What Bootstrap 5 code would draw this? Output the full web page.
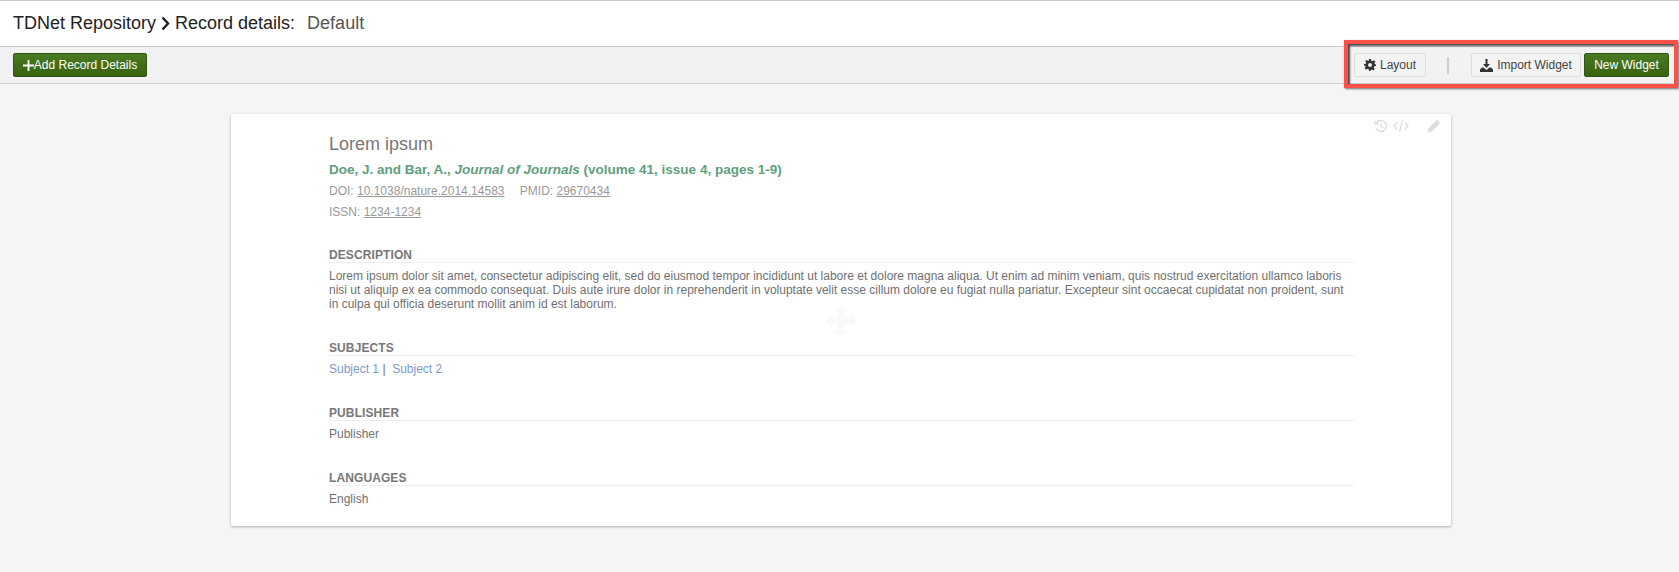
<!DOCTYPE html>
<html lang="en">
<head>
<meta charset="utf-8">
<title>TDNet Repository</title>
<link href="https://cdn.jsdelivr.net/npm/bootstrap@5.3.0/dist/css/bootstrap.min.css" rel="stylesheet">
<style>
html,body{height:100%;}
body{font-family:"Liberation Sans",Arial,sans-serif;background:#f5f5f5;color:#555;font-size:12px;overflow:hidden;}
.page-head{height:47px;background:#fff;border-top:1px solid #ccc;border-bottom:1px solid #ccc;padding-left:13px;font-size:18px;color:#222;gap:0;}
.page-head .sub{color:#555;margin-left:12px;}
.chev{margin:0 5px 0 5px;}
.tool-bar{height:37px;background:#f2f2f2;border-bottom:1px solid #ccc;padding:0 10px 0 13px;}
.btn-green{background:linear-gradient(#4a7a22,#38630f);border:1px solid #2f5510;color:#fff;font-size:12px;line-height:14px;padding:4px 9px;height:24px;border-radius:2px;}
.btn-green:hover{color:#fff;}
.btn-plain{background:#f3f3f3;border:1px solid #ddd;color:#444;font-size:12px;line-height:14px;padding:4px 9px;height:24px;border-radius:2px;}
.btn-add{width:134px;padding:4px 0;}
.btn-layout{width:72px;padding:4px 0;}
.btn-import{width:110px;padding:4px 0;}
.btn-new{width:85px;padding:4px 0;margin-left:3px;font-weight:400;}
.tool-sep{width:2px;height:17px;background:#ccc;margin:0 22px 0 21px;}
.highlight{position:absolute;left:1344px;top:40px;width:334px;height:48px;border:4px solid #fb5148;box-shadow:inset 2px 2px 2px rgba(0,0,0,.7),1px 1px 2px rgba(0,0,0,.55);pointer-events:none;}
.rec-card{position:relative;width:1220px;height:412px;margin:30px 0 0 231px;background:#fff;border-radius:2px;box-shadow:0 1px 3px rgba(0,0,0,.3);padding:19px 97px 0 98px;}
.rec-title{font-size:18px;line-height:22px;color:#777;margin:0 0 7px;font-weight:400;}
.rec-cite{font-size:13.5px;line-height:16px;font-weight:700;color:#5f9f7d;margin:0 0 5px;}
.rec-cite em{font-weight:700;}
.rec-meta{color:#999;line-height:16px;margin:0 0 5px;}
.rec-meta a{color:#999;}
.rec-meta .gap{margin-left:12px;}
.sec-head{font-size:12px;font-weight:700;letter-spacing:.1px;color:#777;line-height:14px;border-bottom:1px solid #eee;margin:0 0 6px;height:15px;}
.sec-body{line-height:14px;color:#707070;margin:0;}
.sec-first{margin-top:28px;}
.sec-next{margin-top:30px;}
.sec-body a{color:#7a9cc6;text-decoration:none;}
.tools{position:absolute;right:10px;top:5px;color:#ddd;}
.tool-edit{margin-left:18px;}
.tool-code{margin-left:5px;}
.move{position:absolute;left:594px;top:191px;}
</style>
</head>
<body>
<div class="highlight"></div>
<div class="page-head d-flex align-items-center">
  <span>TDNet Repository</span>
  <svg class="chev" width="9" height="15" viewBox="0 0 9 15"><path d="M1.500 1.500 7 7.500l-5.500 6" fill="none" stroke="#222" stroke-width="2.500"/></svg>
  <span>Record details:</span>
  <span class="sub">Default</span>
</div>
<div class="tool-bar d-flex align-items-center justify-content-between">
  <button type="button" class="btn btn-green btn-add d-flex align-items-center justify-content-center">
    <svg width="11" height="11" viewBox="0 0 11 11"><path d="M5.500 0v11M0 5.500h11" stroke="#fff" stroke-width="1.800"/></svg>Add Record Details
  </button>
  <div class="d-flex align-items-center">
    <button type="button" class="btn btn-plain btn-layout d-flex align-items-center justify-content-center gap-1">
      <svg width="12" height="12" viewBox="0 0 24 24"><path fill="#333" fill-rule="evenodd" d="M10 0h4l.7 3.500 2.300 1 3-2 2.800 2.800-2 3 1 2.300L24 11v3l-3.500.7-1 2.300 2 3-2.800 2.800-3-2-2.300 1L13 24h-3l-.7-3.500-2.300-1-3 2-2.800-2.800 2-3-1-2.300L0 13v-3l3.500-.7 1-2.300-2-3L5.300 2.200l3 2 1-.700zM12 8a4 4 0 1 0 0 8 4 4 0 0 0 0-8z"/></svg>
      Layout
    </button>
    <span class="tool-sep"></span>
    <button type="button" class="btn btn-plain btn-import d-flex align-items-center justify-content-center gap-1">
      <svg width="13" height="13" viewBox="0 0 13 13"><path d="M5.500 0h2v5h2.500l-3.500 4-3.500-4h2.500z" fill="#333"/><path d="M0 10.500 2 8.500h1.500L6.500 11l3-2.500H11l2 2V13H0z" fill="#333"/></svg>
      Import Widget
    </button>
    <button type="button" class="btn btn-green btn-new">New Widget</button>
  </div>
</div>
<div class="rec-card">
  <div class="tools d-flex align-items-center">
    <svg width="14" height="14" viewBox="0 0 14 14" fill="none" stroke="#ddd" stroke-width="1.400"><path d="M2.500 4A5.500 5.500 0 1 1 2 9"/><path d="M1 1.500V5h3.500"/><path d="M7 4v3.500l2.500 1.500"/></svg>
    <svg class="tool-code" width="16" height="12" viewBox="0 0 16 12" fill="none" stroke="#ddd" stroke-width="1.200"><path d="M4 2.500.9 6 4 9.500M12 2.500 15.100 6 12 9.500M9.500 0 6.500 12"/></svg>
    <svg class="tool-edit" width="14" height="14" viewBox="0 0 14 14"><path d="M10 .8 13.200 4l-8.700 8.700L.5 13.500l.8-4z" fill="#ddd"/></svg>
  </div>
  <svg class="move" width="32" height="32" viewBox="0 0 32 32"><path fill="#f9f9f9" d="M16 0l6.500 7H19v6h6V9.500l7 6.500-7 6.500V19h-6v6h3.500L16 32l-6.500-7H13v-6H7v3.500L0 16l7-6.500V13h6V7H9.500z"/></svg>
  <h2 class="rec-title">Lorem ipsum</h2>
  <p class="rec-cite">Doe, J. and Bar, A., <em>Journal of Journals</em> (volume 41, issue 4, pages 1-9)</p>
  <p class="rec-meta">DOI: <a href="#">10.1038/nature.2014.14583</a> <span class="gap">PMID: <a href="#">29670434</a></span></p>
  <p class="rec-meta">ISSN: <a href="#">1234-1234</a></p>
  <h3 class="sec-head sec-first">DESCRIPTION</h3>
  <p class="sec-body">Lorem ipsum dolor sit amet, consectetur adipiscing elit, sed do eiusmod tempor incididunt ut labore et dolore magna aliqua. Ut enim ad minim veniam, quis nostrud exercitation ullamco laboris nisi ut aliquip ex ea commodo consequat. Duis aute irure dolor in reprehenderit in voluptate velit esse cillum dolore eu fugiat nulla pariatur. Excepteur sint occaecat cupidatat non proident, sunt in culpa qui officia deserunt mollit anim id est laborum.</p>
  <h3 class="sec-head sec-next">SUBJECTS</h3>
  <p class="sec-body"><a href="#">Subject 1</a> |&nbsp; <a href="#">Subject 2</a></p>
  <h3 class="sec-head sec-next">PUBLISHER</h3>
  <p class="sec-body">Publisher</p>
  <h3 class="sec-head sec-next">LANGUAGES</h3>
  <p class="sec-body">English</p>
</div>
<script src="https://cdn.jsdelivr.net/npm/bootstrap@5.3.0/dist/js/bootstrap.bundle.min.js"></script>
</body>
</html>
